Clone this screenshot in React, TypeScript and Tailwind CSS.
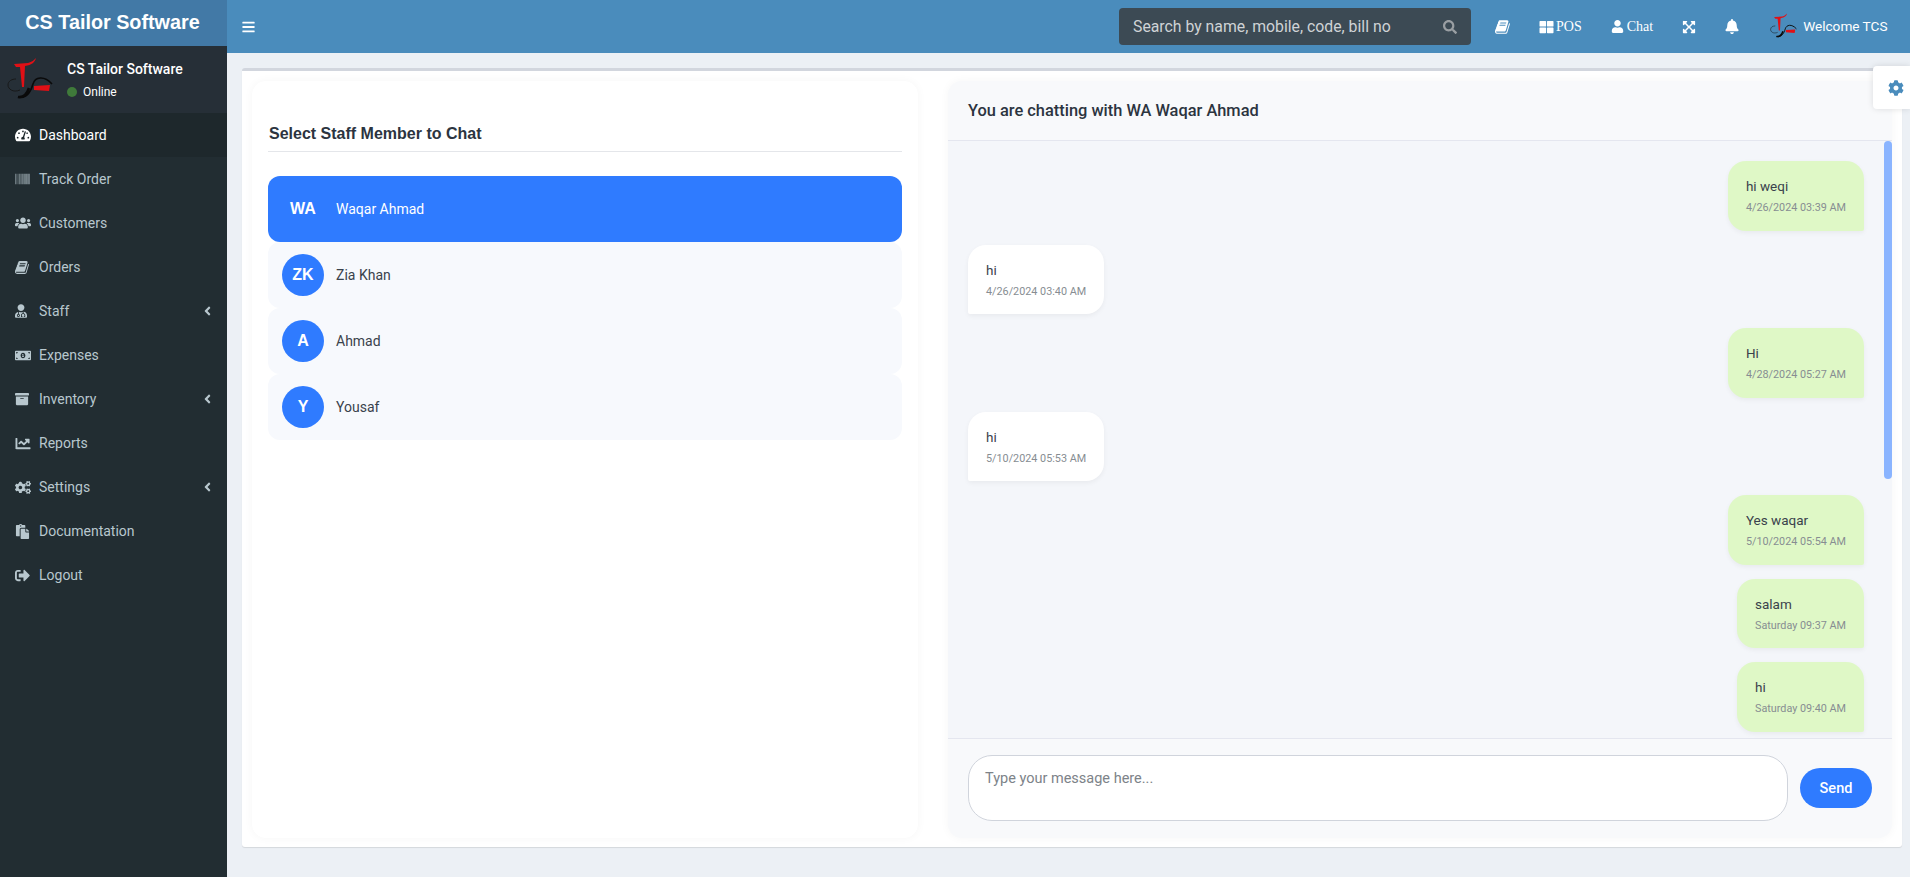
import React from "react";
import { FaBars, FaBell, FaCog, FaCogs, FaChartLine, FaArchive, FaBarcode, FaUsers, FaUserMd, FaMoneyBillAlt, FaPaste, FaSignOutAlt, FaAngleLeft, FaTachometerAlt, FaSearch, FaThLarge, FaUser, FaExpandArrowsAlt } from "react-icons/fa";

function Logo({ className }: { className: string }) {
  return (
    <svg viewBox="0 0 46 46" className={className} aria-hidden="true">
      <path d="M7 7 L21 6 C25 5 27 3 29 1 C28 5 25 8 18 9 L17 30 L15 30 L13 10 L9 10 Z" fill="#e01016" />
      <path d="M13 33 C6 36 1 32 1 28 C1 24 5 22 9 22" stroke="#161616" strokeWidth="0.9" fill="none" />
      <path d="M11 40 C20 42 24 34 26 27 C28 20 37 18 45 27" stroke="#0a0a0a" strokeWidth="1.6" fill="none" />
      <path d="M11 40 C17 41 20 37 22 31" stroke="#0a0a0a" strokeWidth="2.6" fill="none" />
      <path d="M27 29 L43 28 L42 34 L27 33 Z" fill="#e01016" />
    </svg>
  );
}

function BookIcon({ className }: { className: string }) {
  return (
    <svg viewBox="0 0 1792 1792" className={className} fill="currentColor" aria-hidden="true">
      <path d="M1639 478q40 57 18 129l-275 906q-19 64-76.5 107.5t-122.5 43.5h-923q-77 0-148.5-53.5t-99.5-131.5q-24-67-2-127 0-4 3-27t4-37q1-8-3-21.5t-3-19.5q2-11 8-21t16.5-23.5 16.5-23.5q23-38 45-91.5t30-91.5q3-10 .5-30t-.5-28q3-11 17-28t17-23q21-36 42-92t25-90q1-9-2.5-32t.5-28q4-13 22-30.5t22-22.5q19-26 42.5-84.5t27.5-96.5q1-8-3-25.5t-2-26.5q2-8 9-18t18-23 17-21q8-12 16.5-30.5t15-35 16-36 19.5-32 26.5-23.5 36-11.5 47.5 5.5l-1 3q38-9 51-9h761q74 0 114 56t18 130l-274 906q-36 119-71.5 153.5t-128.5 34.5h-869q-27 0-38 15-11 16-1 43 24 70 144 70h923q29 0 56-15.5t35-41.5l300-987q7-22 5-57 38 15 59 43zm-1064 2q-4 13 2 22.5t20 9.5h608q13 0 25.5-9.5t16.5-22.5l21-64q4-13-2-22.5t-20-9.5h-608q-13 0-25.5 9.5t-16.5 22.5zm-83 256q-4 13 2 22.5t20 9.5h608q13 0 25.5-9.5t16.5-22.5l21-64q4-13-2-22.5t-20-9.5h-608q-13 0-25.5 9.5t-16.5 22.5z" />
    </svg>
  );
}

const nav = [
  { label: "Dashboard", icon: FaTachometerAlt, size: "h-[16px] w-[16px]", active: true },
  { label: "Track Order", icon: FaBarcode, size: "h-[14px] w-[15px]" },
  { label: "Customers", icon: FaUsers, size: "h-[16px] w-[16px]" },
  { label: "Orders", icon: BookIcon, size: "h-[15px] w-[15px]" },
  { label: "Staff", icon: FaUserMd, size: "h-[14px] w-[12px]", caret: true },
  { label: "Expenses", icon: FaMoneyBillAlt, size: "h-[15px] w-[16px]" },
  { label: "Inventory", icon: FaArchive, size: "h-[14px] w-[14px]", caret: true },
  { label: "Reports", icon: FaChartLine, size: "h-[15px] w-[16px]" },
  { label: "Settings", icon: FaCogs, size: "h-[15px] w-[16px]", caret: true },
  { label: "Documentation", icon: FaPaste, size: "h-[15px] w-[15px]" },
  { label: "Logout", icon: FaSignOutAlt, size: "h-[15px] w-[15px]" },
];

const staff = [
  { initials: "WA", name: "Waqar Ahmad", active: true },
  { initials: "ZK", name: "Zia Khan" },
  { initials: "A", name: "Ahmad" },
  { initials: "Y", name: "Yousaf" },
];

const messages = [
  { me: true, text: "hi weqi", time: "4/26/2024 03:39 AM" },
  { me: false, text: "hi", time: "4/26/2024 03:40 AM" },
  { me: true, text: "Hi", time: "4/28/2024 05:27 AM" },
  { me: false, text: "hi", time: "5/10/2024 05:53 AM" },
  { me: true, text: "Yes waqar", time: "5/10/2024 05:54 AM" },
  { me: true, text: "salam", time: "Saturday 09:37 AM" },
  { me: true, text: "hi", time: "Saturday 09:40 AM" },
];

export default function App() {
  return (
    <div className="flex h-[877px] w-[1910px] overflow-hidden bg-[#ecf0f5] font-['Roboto',sans-serif] text-[14px] text-[#333]">
      <aside className="flex w-[227px] shrink-0 flex-col bg-[#222d32]">
        <div className="flex h-[46px] items-center justify-center pr-[2px] bg-[#4279a6] font-['Liberation_Sans',sans-serif] text-[19.8px] font-bold text-white">
          CS Tailor Software
        </div>
        <div className="flex h-[67px] items-center bg-[#262f37] pl-[7px]">
          <Logo className="h-[46px] w-[46px]" />
          <div className="ml-[14px] flex flex-col gap-[5px]">
            <span className="text-[14px] font-medium leading-[18px] text-white">CS Tailor Software</span>
            <span className="flex items-center gap-[6px] pt-[1px] text-[12px] leading-[16px] text-white">
              <span className="h-[10px] w-[10px] rounded-full bg-[#3f7a3a]" />
              Online
            </span>
          </div>
        </div>
        <nav className="flex flex-col">
          {nav.map((n) => {
            const Icon = n.icon;
            return (
              <div key={n.label} className={`flex h-[44px] items-center pl-[15px] pr-[15px] ${n.active ? "bg-[#1e282c] text-white" : "text-[#b8c7ce]"}`}>
                <span className="flex w-[24px] shrink-0 items-center"><Icon className={n.size} /></span>
                <span className="pt-[1px] text-[14px]">{n.label}</span>
                {n.caret && <FaAngleLeft className="ml-auto h-[14px] w-[9px]" />}
              </div>
            );
          })}
        </nav>
      </aside>

      <div className="flex min-w-0 flex-1 flex-col">
        <header className="flex h-[53px] shrink-0 items-center bg-[#4a8cbc] text-white">
          <FaBars className="ml-[15px] h-[14px] w-[13px]" />
          <div className="ml-[864px] flex h-[37px] w-[352px] items-center justify-between rounded-[4px] bg-[#3c4a54] pl-[14px] pr-[14px] text-[#cfd3d6]">
            <span className="text-[15.8px]">Search by name, mobile, code, bill no</span>
            <FaSearch className="h-[14px] w-[14px] text-[#9a9fa3]" />
          </div>
          <BookIcon className="ml-[24px] h-[16px] w-[16px]" />
          <span className="ml-[28px] flex items-center font-['Liberation_Serif',serif] text-[14px]"><FaThLarge className="mr-[2px] h-[14px] w-[15px]" />POS</span>
          <span className="ml-[29px] flex items-center font-['Liberation_Serif',serif] text-[14px]"><FaUser className="mr-[3px] h-[13px] w-[13px]" />Chat</span>
          <FaExpandArrowsAlt className="ml-[29px] h-[14px] w-[14px]" />
          <FaBell className="ml-[29px] h-[15px] w-[14px]" />
          <Logo className="ml-[31px] h-[27px] w-[27px]" />
          <span className="ml-[6px] text-[13.6px]">Welcome TCS</span>
        </header>

        <main className="relative flex-1 px-[15px] pt-[15px]">
          <div className="flex h-[779px] w-[1660px] gap-[30px] rounded-[3px] border-t-[3px] border-[#d2d6de] bg-white px-[10px] pt-[10px] shadow-[0_1px_1px_rgba(0,0,0,0.1)]">
            <section className="h-[757px] w-[666px] rounded-[14px] bg-white px-[16px] pt-[42px] shadow-[0_0_10px_rgba(0,0,0,0.04)]">
              <h2 className="border-b border-[#e4e6ea] pb-[6px] pl-px font-['Liberation_Sans',sans-serif] text-[16px] font-bold leading-[22px] text-[#2c3440]">
                Select Staff Member to Chat
              </h2>
              <div className="mt-[24px] flex flex-col">
                {staff.map((s) => (
                  <div key={s.name} className={`flex h-[66px] items-center rounded-[12px] pl-[14px] ${s.active ? "bg-[#2f7bff] text-white" : "bg-[#f7f9fd] text-[#3a424c]"}`}>
                    <span className={`flex h-[42px] w-[42px] items-center justify-center rounded-full font-['Liberation_Sans',sans-serif] text-[16px] font-bold text-white ${s.active ? "" : "bg-[#2f7bff]"}`}>{s.initials}</span>
                    <span className="ml-[12px] pt-[1px] text-[14px]">{s.name}</span>
                  </div>
                ))}
              </div>
            </section>

            <section className="flex h-[757px] min-w-0 flex-1 flex-col overflow-hidden rounded-[14px] bg-[#f8f9fb] shadow-[0_0_10px_rgba(0,0,0,0.04)]">
              <div className="flex h-[60px] shrink-0 items-center border-b border-[#e4e6ef] pl-[20px] pt-[1px] text-[16.4px] font-medium text-[#2c3440]">
                You are chatting with WA Waqar Ahmad
              </div>
              <div className="relative h-[597px] shrink-0 overflow-hidden bg-[#f4f6fa] pl-[20px] pr-[28px] pt-[20px]">
                <div className="flex flex-col gap-[14px]">
                  {messages.map((m, i) => (
                    <div key={i} className={`flex ${m.me ? "justify-end" : "justify-start"}`}>
                      <div className={`flex h-[69.5px] flex-col justify-center rounded-[18px] px-[18px] pt-[1px] shadow-[0_2px_5px_rgba(0,0,0,0.05)] ${m.me ? "rounded-br-[2px] bg-[#dff8c6]" : "rounded-bl-[2px] bg-white"}`}>
                        <span className="text-[13.5px] leading-[20px] text-[#3a424c]">{m.text}</span>
                        <span className="mt-[4px] text-[10.8px] leading-[16px] text-[#878d92]">{m.time}</span>
                      </div>
                    </div>
                  ))}
                </div>
                <div className="absolute right-0 top-0 h-[338px] w-[8px] rounded-full bg-[#8ab4ff]" />
              </div>
              <div className="flex flex-1 items-start border-t border-[#e4e6ef] pl-[20px] pr-[20px] pt-[16px]">
                <div className="h-[66px] flex-1 rounded-[24px] border border-[#d0d4dc] bg-white px-[16px] pt-[11px] text-[14.5px] leading-[24px] text-[#7d8389]">
                  Type your message here...
                </div>
                <button className="ml-[12px] mt-[13px] h-[40px] w-[72px] rounded-[20px] bg-[#2f7bff] pt-[1px] text-[14.5px] font-medium text-white">Send</button>
              </div>
            </section>
          </div>
          <div className="absolute right-0 top-[13px] flex h-[43px] w-[37px] items-center justify-center rounded-l-[4px] bg-white pl-[8px] shadow-[0_0_6px_rgba(0,0,0,0.12)]">
            <FaCog className="h-[16px] w-[16px] text-[#4a8cbc]" />
          </div>
        </main>
      </div>
    </div>
  );
}
